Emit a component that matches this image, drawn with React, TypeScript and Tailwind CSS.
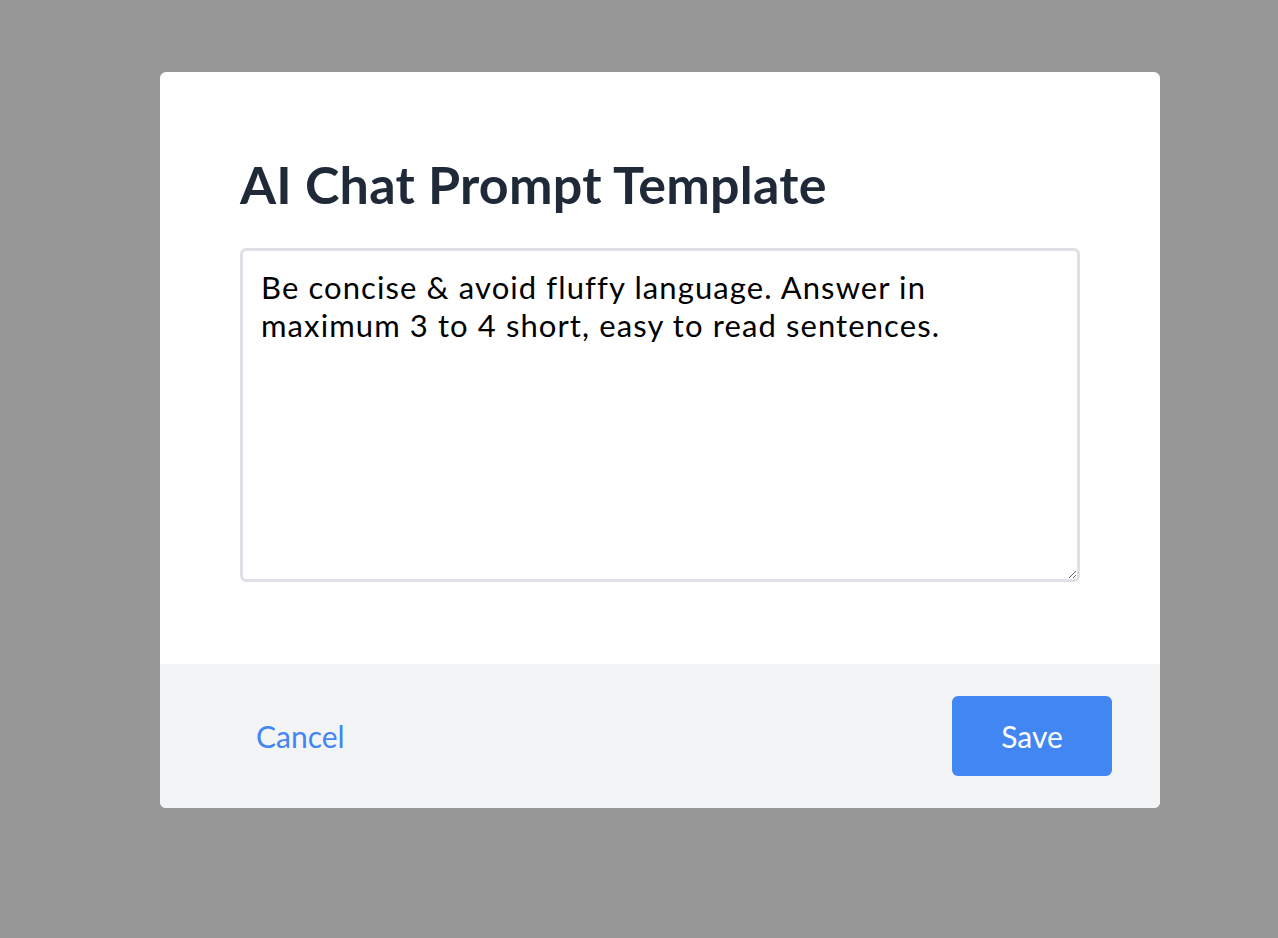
export default function App() {
  return (
    <div className="min-h-[938px] w-full bg-[#979797] pt-[72px] font-['Lato','Liberation_Sans',sans-serif]">
      <div className="ml-[160px] w-[1000px] overflow-hidden rounded-md bg-white">
        <div className="px-20 pb-[82px] pt-20">
          <h1 className="text-[52px] font-bold leading-[64px] tracking-[0.25px] text-[#1f2937]">
            AI Chat Prompt Template
          </h1>
          <textarea
            className="mt-8 block h-[334px] w-full resize-y rounded-md border-[3px] border-[#e0e1e6] px-[18px] py-[17px] text-[31px] leading-[38px] tracking-[1.1px] text-black outline-none"
            defaultValue="Be concise & avoid fluffy language. Answer in maximum 3 to 4 short, easy to read sentences."
          />
        </div>
        <div className="flex items-center justify-between bg-[#f3f4f6] px-12 py-8">
          <button className="h-20 rounded-md px-12 text-[30px] text-[#4286f4]">Cancel</button>
          <button className="h-20 w-40 rounded-md bg-[#4286f4] text-[30px] text-white">Save</button>
        </div>
      </div>
    </div>
  );
}
